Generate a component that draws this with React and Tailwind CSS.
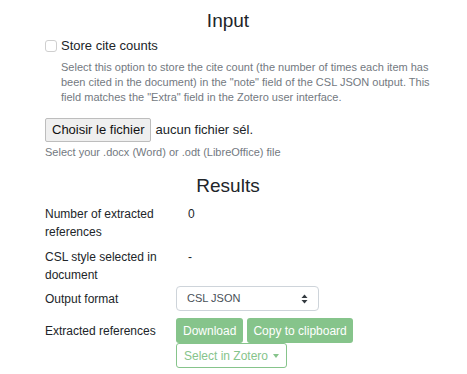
import React from "react";

const green = "bg-[#86c48b]";

const Row = ({ label, children, className = "" }) => {
  return (
    <div className={`flex items-start ${className}`}>
      <div className="w-[131px] shrink-0 pr-[15px] leading-[18px]">{label}</div>
      <div className="flex-1">{children}</div>
    </div>
  );
};

const App = () => {
  return (
    <main className="w-[467px] h-[374px] overflow-hidden bg-white text-[#212529] font-['Liberation_Sans',Arial,sans-serif] text-[12px]">
      <h2 className="pt-[8px] pr-[11px] text-center text-[19px] leading-[26px]">Input</h2>

      <div className="mt-[3px] ml-[45px] flex items-center h-[18px]">
        <span className="w-[12px] h-[12px] rounded-[3px] border border-[#cfcfcf] bg-white shrink-0"></span>
        <label className="ml-[4px] text-[13px] leading-[18px]">Store cite counts</label>
      </div>

      <p className="mt-[5px] ml-[61px] w-[376px] text-[11px] leading-[15px] text-[#73797f]">
        Select this option to store the cite count (the number of times each item has
        been cited in the document) in the "note" field of the CSL JSON output. This
        field matches the "Extra" field in the Zotero user interface.
      </p>

      <div className="mt-[13px] ml-[45px] flex items-center">
        <button className="h-[24px] px-[6px] border border-[#bdbdbd] rounded-[2px] bg-[#efefef] text-[13px] text-[#111]">
          Choisir le fichier
        </button>
        <span className="ml-[4px] text-[13px]">aucun fichier sél.</span>
      </div>
      <p className="mt-[3px] ml-[45px] text-[11px] leading-[15px] text-[#73797f]">
        Select your .docx (Word) or .odt (LibreOffice) file
      </p>

      <h2 className="mt-[13px] pr-[11px] text-center text-[19px] leading-[26px]">Results</h2>

      <div className="ml-[45px]">
        <Row label="Number of extracted references" className="mt-[6px]">
          <div className="pl-[12px] leading-[18px]">0</div>
        </Row>
        <Row label="CSL style selected in document" className="mt-[7px]">
          <div className="pl-[12px] leading-[18px]">-</div>
        </Row>
        <div className="mt-[2px] flex items-center">
          <div className="w-[131px] shrink-0 leading-[18px]">Output format</div>
          <div className="w-[143px] h-[25px] border border-[#ced4da] rounded-[4px] flex items-center justify-between pl-[10px] pr-[10px] text-[11px] text-[#495057]">
            <span>CSL JSON</span>
            <svg width="7" height="10" viewBox="0 0 7 10">
              <path d="M3.5 0.5 L6.5 4 L0.5 4 Z" fill="#343a40" />
              <path d="M3.5 9.5 L6.5 6 L0.5 6 Z" fill="#343a40" />
            </svg>
          </div>
        </div>
        <div className="mt-[7px] flex items-start">
          <div className="w-[131px] shrink-0 h-[25px] flex items-center">Extracted references</div>
          <div className="flex flex-col items-start">
            <div className="flex gap-[4px]">
              <button className={`h-[25px] px-[7px] rounded-[3px] ${green} text-white text-[12px]`}>Download</button>
              <button className={`h-[25px] px-[6px] rounded-[3px] ${green} text-white text-[12px]`}>Copy to clipboard</button>
            </div>
            <button className="h-[25px] pl-[7px] pr-[7px] rounded-[3px] border border-[#86c48b] text-[#86c48b] text-[12px] flex items-center gap-[5px]">
              Select in Zotero
              <svg width="6" height="4" viewBox="0 0 6 4">
                <path d="M0 0 L6 0 L3 4 Z" fill="#86c48b" />
              </svg>
            </button>
          </div>
        </div>
      </div>
    </main>
  );
};

export default App;
